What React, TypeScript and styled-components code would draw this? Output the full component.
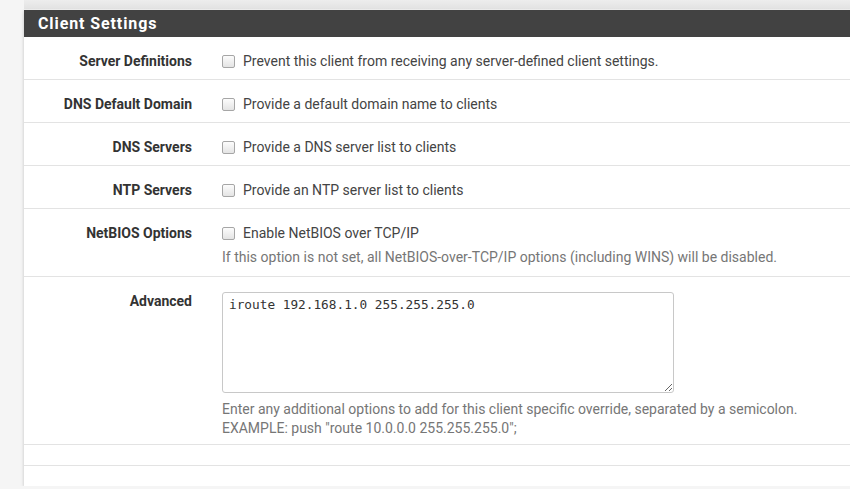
import React from 'react'
import styled, { createGlobalStyle } from 'styled-components'

const GlobalStyle = createGlobalStyle`
  html, body {
    margin: 0;
    padding: 0;
    background: #f5f5f5;
    overflow: hidden;
  }
  body {
    font-family: Roboto, 'Liberation Sans', sans-serif;
    font-size: 14px;
    color: #333;
  }
`

const Page = styled.div`
  display: flex;
  flex-direction: column;
  padding-left: 24px;
  margin-right: -20px;
`

const PrevPanelEdge = styled.div`
  flex-shrink: 0;
  height: 10px;
  background: linear-gradient(#ededed, #e2e2e2);
  border-bottom: 1px solid #f2f2f2;
  box-sizing: border-box;
`

const Panel = styled.section`
  flex-shrink: 0;
  background: #fff;
  box-shadow: 0 2px 4px rgba(0, 0, 0, 0.12), -1px 0 2px rgba(0, 0, 0, 0.05);
  padding-bottom: 20px;
`

const PanelHeading = styled.h2`
  margin: 0;
  height: 27px;
  padding: 0 14px;
  background: #424242;
  color: #fff;
  font-size: 16px;
  font-weight: 700;
  letter-spacing: 0.9px;
  line-height: 27px;
`

const Row = styled.div`
  display: grid;
  grid-template-columns: 183px 1fr;
  border-bottom: 1px solid #e3e3e3;
`

const Label = styled.div`
  text-align: right;
  padding: 15px 15px 0 0;
  font-weight: 700;
  font-size: 14px;
  line-height: 18px;
  color: #333;
`

const Field = styled.div<{ $padBottom?: number }>`
  padding: 15px 0 ${p => p.$padBottom ?? 9}px 15px;
  line-height: 18px;
`

const CheckLine = styled.label`
  display: flex;
  align-items: center;
  gap: 8px;
  font-size: 14px;
  color: #444;
  height: 18px;
`

const Box = styled.span`
  width: 13px;
  height: 13px;
  box-sizing: border-box;
  border: 1px solid #a6a6a6;
  border-radius: 2px;
  background: linear-gradient(#fcfcfc, #e4e4e4);
  flex-shrink: 0;
`

const Help = styled.div<{ $gap: number }>`
  margin-top: ${p => p.$gap}px;
  font-size: 14px;
  line-height: 19px;
  color: #767676;
`

const TextArea = styled.textarea`
  display: block;
  width: 452px;
  height: 101px;
  box-sizing: border-box;
  margin: 0;
  padding: 4px 6px;
  border: 1px solid #c8c8c8;
  border-radius: 3px;
  font-family: 'DejaVu Sans Mono', 'Liberation Mono', monospace;
  font-size: 12.75px;
  line-height: 16px;
  color: #333;
  resize: vertical;
  outline: none;
`

const Empty = styled.div`
  height: 20px;
  border-bottom: 1px solid #e3e3e3;
`

const Check: React.FC<{ text: string }> = ({ text }) => (
  <CheckLine>
    <Box />
    {text}
  </CheckLine>
)

const App: React.FC = () => (
  <>
    <GlobalStyle />
    <Page>
      <PrevPanelEdge />
      <Panel>
        <PanelHeading>Client Settings</PanelHeading>

        <Row>
          <Label>Server Definitions</Label>
          <Field>
            <Check text="Prevent this client from receiving any server-defined client settings." />
          </Field>
        </Row>

        <Row>
          <Label>DNS Default Domain</Label>
          <Field>
            <Check text="Provide a default domain name to clients" />
          </Field>
        </Row>

        <Row>
          <Label>DNS Servers</Label>
          <Field>
            <Check text="Provide a DNS server list to clients" />
          </Field>
        </Row>

        <Row>
          <Label>NTP Servers</Label>
          <Field>
            <Check text="Provide an NTP server list to clients" />
          </Field>
        </Row>

        <Row>
          <Label>NetBIOS Options</Label>
          <Field>
            <Check text="Enable NetBIOS over TCP/IP" />
            <Help $gap={6}>
              If this option is not set, all NetBIOS-over-TCP/IP options (including WINS) will be disabled.
            </Help>
          </Field>
        </Row>

        <Row>
          <Label>Advanced</Label>
          <Field $padBottom={6}>
            <TextArea defaultValue="iroute 192.168.1.0 255.255.255.0" spellCheck={false} />
            <Help $gap={7}>
              Enter any additional options to add for this client specific override, separated by a semicolon.
              <br />
              EXAMPLE: push "route 10.0.0.0 255.255.255.0";
            </Help>
          </Field>
        </Row>

        <Empty />
      </Panel>
    </Page>
  </>
)

export default App
